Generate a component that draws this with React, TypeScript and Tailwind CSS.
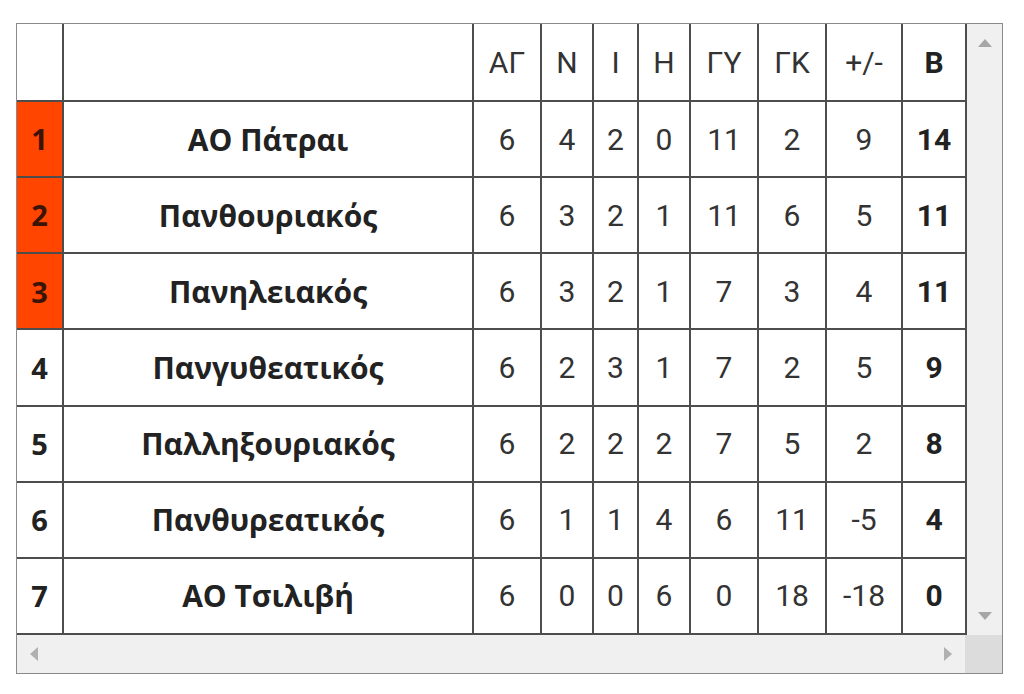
import React from "react";

const widths = [46, 410, 68, 52, 45, 52, 68, 68, 76, 64];

const headers = ["", "", "ΑΓ", "Ν", "Ι", "Η", "ΓΥ", "ΓΚ", "+/-", "Β"];

const rows = [
  { pos: 1, team: "ΑΟ Πάτραι", stats: [6, 4, 2, 0, 11, 2, 9], pts: 14, hl: true },
  { pos: 2, team: "Πανθουριακός", stats: [6, 3, 2, 1, 11, 6, 5], pts: 11, hl: true },
  { pos: 3, team: "Πανηλειακός", stats: [6, 3, 2, 1, 7, 3, 4], pts: 11, hl: true },
  { pos: 4, team: "Πανγυθεατικός", stats: [6, 2, 3, 1, 7, 2, 5], pts: 9, hl: false },
  { pos: 5, team: "Παλληξουριακός", stats: [6, 2, 2, 2, 7, 5, 2], pts: 8, hl: false },
  { pos: 6, team: "Πανθυρεατικός", stats: [6, 1, 1, 4, 6, 11, -5], pts: 4, hl: false },
  { pos: 7, team: "ΑΟ Τσιλιβή", stats: [6, 0, 0, 6, 0, 18, -18], pts: 0, hl: false },
];

const cell = "border-r-2 border-b-2 border-[#4d4d4d] text-center align-middle p-0";

const App = () => {
  return (
    <div className="w-[1024px] h-[694px] bg-white pt-[23px] pl-[16px]">
      <div className="w-[987px] h-[651px] border-[1.5px] border-[#8a8a8a] flex flex-col bg-white">
        <div className="flex h-[611px]">
          <table
            className="border-collapse table-fixed w-[948px] text-[#333]"
            style={{ fontFamily: "Roboto, 'Liberation Sans', sans-serif" }}
          >
            <colgroup>
              {widths.map((w, i) => (
                <col key={i} style={{ width: w }} />
              ))}
            </colgroup>
            <thead>
              <tr className="h-[77px]">
                {headers.map((h, i) => (
                  <th
                    key={i}
                    className={`${cell} text-[30px] ${i === 9 ? "font-bold text-[#222]" : "font-normal"}`}
                  >
                    {h}
                  </th>
                ))}
              </tr>
            </thead>
            <tbody>
              {rows.map((r) => (
                <tr key={r.pos} className="h-[76px]">
                  <td
                    className={`${cell} text-[29px] font-bold ${r.hl ? "bg-[#ff4500] text-[#3b1406]" : "text-[#222]"}`}
                    style={{ fontFamily: "'Open Sans', 'Noto Sans', sans-serif" }}
                  >
                    {r.pos}
                  </td>
                  <td
                    className={`${cell} text-[30px] font-bold text-[#222]`}
                    style={{ fontFamily: "'Open Sans', 'Noto Sans', sans-serif" }}
                  >
                    {r.team}
                  </td>
                  {r.stats.map((s, i) => (
                    <td key={i} className={`${cell} text-[30px]`}>
                      {s}
                    </td>
                  ))}
                  <td className={`${cell} text-[30px] font-bold text-[#222]`}>{r.pts}</td>
                </tr>
              ))}
            </tbody>
          </table>
          {/* vertical scrollbar */}
          <div className="w-[37px] h-full bg-[#f0f0f0] flex flex-col items-center justify-between py-[15px]">
            <svg width="14" height="8" viewBox="0 0 14 8">
              <polygon points="7,0 14,8 0,8" fill="#a6a6a6" />
            </svg>
            <svg width="14" height="8" viewBox="0 0 14 8">
              <polygon points="0,0 14,0 7,8" fill="#a6a6a6" />
            </svg>
          </div>
        </div>
        {/* horizontal scrollbar */}
        <div className="flex flex-1">
          <div className="w-[948px] bg-[#f0f0f0] flex items-center justify-between px-[13px]">
            <svg width="8" height="14" viewBox="0 0 8 14">
              <polygon points="8,0 8,14 0,7" fill="#b0b0b0" />
            </svg>
            <svg width="8" height="14" viewBox="0 0 8 14">
              <polygon points="0,0 8,7 0,14" fill="#b0b0b0" />
            </svg>
          </div>
          <div className="w-[37px] bg-[#dcdcdc]" />
        </div>
      </div>
    </div>
  );
};

export default App;
